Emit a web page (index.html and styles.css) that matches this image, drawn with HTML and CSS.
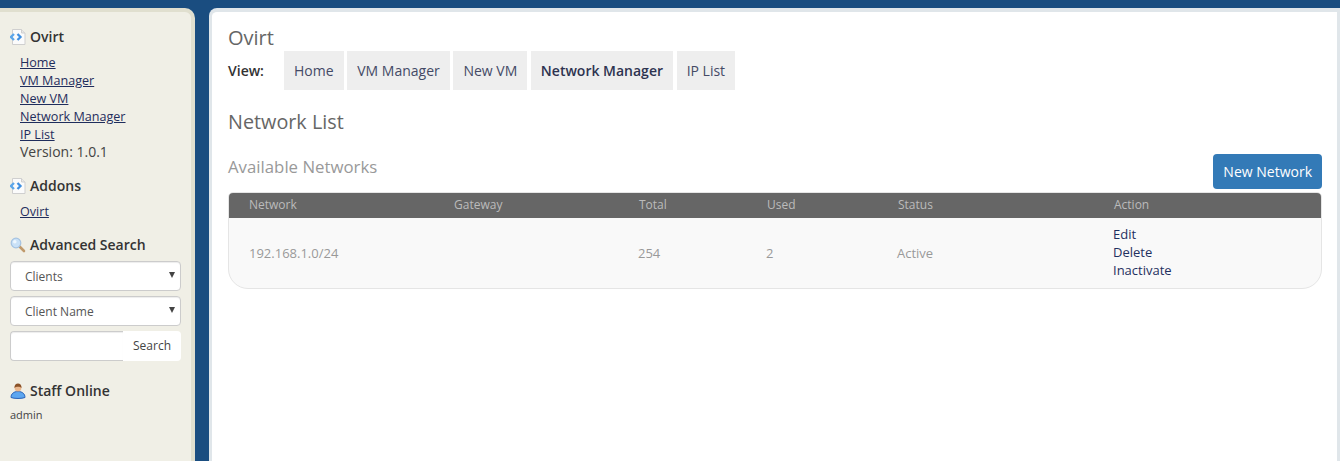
FILE: index.html
```html
<!DOCTYPE html>
<html lang="en">
<head>
<meta charset="utf-8">
<title>Ovirt</title>
<link rel="stylesheet" href="styles.css">
</head>
<body>
<div class="layout">
  <aside class="sidebar">
    <section class="block block-ovirt">
      <h3 class="side-title">
        <svg class="side-icon" viewBox="0 0 16 16"><path d="M2.500.5h9l3.500 3.500v11.500h-12.500z" fill="#fbfbfb" stroke="#cfcfcf"/><path d="M11.500.5v3.500h3.500" fill="#e8e8e8" stroke="#cfcfcf"/><path d="M4 5 1 8l3 3" fill="none" stroke="#5ba6ea" stroke-width="2.300"/><path d="M7.500 5l3 3-3 3" fill="none" stroke="#3f8fe0" stroke-width="2.300"/></svg>
        Ovirt
      </h3>
      <ul class="side-links">
        <li><a href="#">Home</a></li>
        <li><a href="#">VM Manager</a></li>
        <li><a href="#">New VM</a></li>
        <li><a href="#">Network Manager</a></li>
        <li><a href="#">IP List</a></li>
        <li class="version">Version: 1.0.1</li>
      </ul>
    </section>
    <section class="block block-addons">
      <h3 class="side-title">
        <svg class="side-icon" viewBox="0 0 16 16"><path d="M2.500.5h9l3.500 3.500v11.500h-12.500z" fill="#fbfbfb" stroke="#cfcfcf"/><path d="M11.500.5v3.500h3.500" fill="#e8e8e8" stroke="#cfcfcf"/><path d="M4 5 1 8l3 3" fill="none" stroke="#5ba6ea" stroke-width="2.300"/><path d="M7.500 5l3 3-3 3" fill="none" stroke="#3f8fe0" stroke-width="2.300"/></svg>
        Addons
      </h3>
      <ul class="side-links">
        <li><a href="#">Ovirt</a></li>
      </ul>
    </section>
    <section class="block block-search">
      <h3 class="side-title">
        <svg class="side-icon" viewBox="0 0 16 16"><path d="M9.500 9.500 14 14" stroke="#c09a6c" stroke-width="2.600" stroke-linecap="round"/><circle cx="6" cy="6" r="4.800" fill="#c9e1f7" stroke="#a5c3e2" stroke-width="1.200"/><circle cx="4.800" cy="4.800" r="1.800" fill="#eef7ff"/></svg>
        Advanced Search
      </h3>
      <div class="fake-select">Clients</div>
      <div class="fake-select">Client Name</div>
      <div class="search-row">
        <input class="search-input" type="text" aria-label="Search">
        <button class="search-btn" type="button">Search</button>
      </div>
    </section>
    <section class="block block-staff">
      <h3 class="side-title">
        <svg class="side-icon" viewBox="0 0 16 16"><path d="M1 14.500c0-3.500 2.500-6 7-6s7 2.500 7 6c-3 1.300-11 1.300-14 0z" fill="#5ca6f0" stroke="#2a63b8"/><circle cx="8" cy="5" r="3.400" fill="#eab88f"/><path d="M4.400 5c0-3 1.600-4.400 3.600-4.400S11.600 2 11.600 5C10 3.400 6 3.400 4.400 5z" fill="#8a5228"/></svg>
        Staff Online
      </h3>
      <p class="staff-name">admin</p>
    </section>
  </aside>
  <main class="content">
    <h1 class="page-title">Ovirt</h1>
    <nav class="view-nav">
      <strong class="view-label">View:</strong>
      <a class="tab" href="#">Home</a>
      <a class="tab" href="#">VM Manager</a>
      <a class="tab" href="#">New VM</a>
      <a class="tab tab-active" href="#">Network Manager</a>
      <a class="tab" href="#">IP List</a>
    </nav>
    <h2 class="section-title">Network List</h2>
    <div class="list-head">
      <h3 class="list-title">Available Networks</h3>
      <a class="btn-primary" href="#">New Network</a>
    </div>
    <div class="table-wrap">
      <table class="net-table">
        <colgroup>
          <col class="c1"><col class="c2"><col class="c3"><col class="c4"><col class="c5"><col class="c6">
        </colgroup>
        <thead>
          <tr><th>Network</th><th>Gateway</th><th>Total</th><th>Used</th><th>Status</th><th>Action</th></tr>
        </thead>
        <tbody>
          <tr>
            <td>192.168.1.0/24</td>
            <td></td>
            <td>254</td>
            <td>2</td>
            <td>Active</td>
            <td class="actions"><a href="#">Edit</a><a href="#">Delete</a><a href="#">Inactivate</a></td>
          </tr>
        </tbody>
      </table>
    </div>
  </main>
</div>
</body>
</html>
```
FILE: styles.css
```css
* { box-sizing: border-box; }
html, body { height: 100%; }
body {
  margin: 0;
  background: #1a4d80;
  font-family: "Open Sans", sans-serif;
  font-size: 13px;
  color: #555;
  overflow: hidden;
}
a { color: #1f2d5c; }
.layout {
  display: flex;
  height: 461px;
  padding-top: 8px;
  gap: 14px;
}
.sidebar {
  width: 195px;
  flex: none;
  background: #f0efe6;
  border-top: 4px solid #e0dfcf;
  border-right: 4px solid #e0dfcf;
  border-top-right-radius: 10px;
  padding: 0 10px;
}
.side-title {
  display: flex;
  align-items: center;
  gap: 4px;
  margin: 0;
  font-size: 14px;
  font-weight: 600;
  line-height: 20px;
  color: #333;
}
.side-icon { width: 16px; height: 16px; flex: none; }
.block-ovirt { padding-top: 15px; }
.block-addons { margin-top: 15px; }
.block-search { margin-top: 14px; }
.block-staff { margin-top: 20px; }
.side-links {
  list-style: none;
  margin: 7px 0 0;
  padding: 0 0 0 10px;
  font-size: 12.600px;
  line-height: 18px;
}
.side-links a { color: #1f2d5c; }
.version { margin-top: -1px; font-size: 14px; color: #444; }
.fake-select {
  position: relative;
  height: 30px;
  margin-top: 6px;
  padding-left: 14px;
  width: 171px;
  background: #fff;
  border: 1px solid #ccc;
  border-radius: 4px;
  box-shadow: inset 0 1px 1px rgba(0,0,0,.075);
  font-size: 12px;
  line-height: 30px;
  color: #555;
}
.fake-select + .fake-select { margin-top: 5px; }
.fake-select::after {
  content: "";
  position: absolute;
  right: 5px;
  top: 10px;
  border-left: 3px solid transparent;
  border-right: 3px solid transparent;
  border-top: 6px solid #444;
}
.search-row { display: flex; width: 171px; height: 30px; margin-top: 5px; }
.search-input {
  width: 113px;
  border: 1px solid #ccc;
  border-right: 0;
  border-radius: 4px 0 0 4px;
  box-shadow: inset 0 1px 1px rgba(0,0,0,.075);
  background: #fff;
  padding: 0;
}
.search-btn {
  width: 58px;
  border: 0;
  border-radius: 0 4px 4px 0;
  background: #fff;
  font: 12px "Open Sans", sans-serif;
  color: #444;
  padding: 0 0 2px;
}
.staff-name { margin: 6px 0 0; font-size: 11px; line-height: 15px; color: #444; }
.content {
  flex: 1;
  min-width: 0;
  background: #fff;
  border-top: 4px solid #e0e6ea;
  border-left: 3px solid #e0e6ea;
  border-right: 3px solid #e0e6ea;
  border-top-left-radius: 8px;
  padding: 0 15px 0 16px;
}
.page-title {
  margin: 13px 0 0;
  font-size: 20px;
  font-weight: 400;
  line-height: 26px;
  color: #666;
}
.view-nav { margin-top: 0; height: 39px; line-height: 39px; font-size: 14px; }
.view-label { display: inline-block; width: 52.400px; color: #333; font-weight: 600; }
.tab {
  display: inline-block;
  height: 39px;
  padding: 0 10px;
  background: #eee;
  color: #444a66;
  text-decoration: none;
  line-height: 39px;
}
.tab-active { font-weight: 600; color: #2d3350; }
.section-title {
  margin: 19px 0 0;
  font-size: 19.800px;
  font-weight: 400;
  line-height: 26px;
  color: #666;
}
.list-head {
  display: flex;
  justify-content: space-between;
  align-items: flex-start;
  margin-top: 19px;
  height: 35px;
}
.list-title {
  margin: 0;
  padding-top: 1px;
  font-size: 16.800px;
  font-weight: 400;
  line-height: 24px;
  color: #999;
}
.btn-primary {
  display: block;
  height: 35px;
  padding: 0 10px;
  background: #337ab7;
  border-radius: 4px;
  color: #fff;
  font-size: 14px;
  line-height: 35px;
  text-decoration: none;
}
.table-wrap {
  margin-top: 3px;
  background: #f9f9f9;
  border: 1px solid #e5e5e5;
  border-radius: 5px 5px 20px 20px;
  overflow: hidden;
}
.net-table {
  width: 100%;
  border-collapse: collapse;
  table-layout: fixed;
  font-size: 12px;
}
.c1 { width: 205px; }
.c2 { width: 185px; }
.c3 { width: 128px; }
.c4 { width: 131px; }
.c5 { width: 216px; }
.net-table th {
  height: 25px;
  padding: 0 0 2px 20px;
  background: #666;
  color: #bbb;
  font-weight: 400;
  text-align: left;
}
.net-table td {
  height: 70px;
  padding: 0 0 0 19px;
  font-size: 13px;
  color: #999;
  vertical-align: middle;
}
.net-table td:first-child { padding-left: 20px; }
.net-table td.actions { padding-bottom: 2px; }
.net-table td.actions a {
  display: block;
  line-height: 18px;
  color: #1f3060;
  text-decoration: none;
}
```
